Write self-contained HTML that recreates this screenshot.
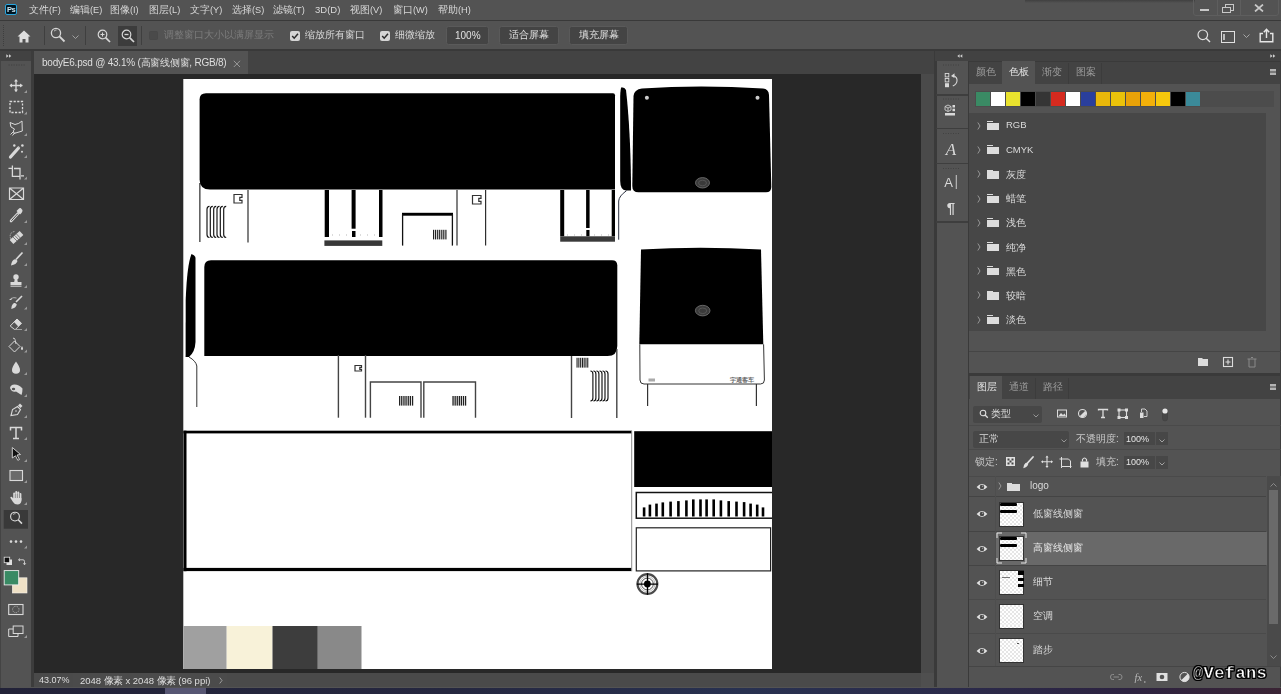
<!DOCTYPE html>
<html><head><meta charset="utf-8">
<style>
*{margin:0;padding:0;box-sizing:border-box}
html,body{width:1281px;height:694px;overflow:hidden;background:#535353;font-family:"Liberation Sans",sans-serif;color:#d4d4d4;font-size:10px}
.a{position:absolute}
.t{position:absolute;white-space:nowrap;line-height:1;will-change:transform}
.t i{display:inline-block;width:1em;text-align:center;font-style:normal}
</style></head><body>
<!-- menu bar -->
<div class="a" style="left:0;top:0;width:1281px;height:20px;background:#535353"></div>
<div class="a" style="left:0;top:20px;width:1281px;height:1px;background:#393939"></div>
<!-- options bar -->
<div class="a" style="left:0;top:21px;width:1281px;height:29px;background:#535353"></div>
<div class="a" style="left:0;top:49px;width:1281px;height:2px;background:#393939"></div>

<!-- PS logo -->
<div class="a" style="left:5px;top:4px;width:12px;height:11px;background:#001622;border:1.2px solid #2aa6de;border-radius:2px"></div>
<div class="t" style="left:7.3px;top:6px;font-size:7.5px;font-weight:bold;color:#cfe9f2;letter-spacing:-0.4px">Ps</div>
<div class="t" style="left:29px;top:5px;font-size:10px;color:#d8d8d8"><i>文</i><i>件</i><span style="font-size:9.2px">(F)</span></div>
<div class="t" style="left:70px;top:5px;font-size:10px;color:#d8d8d8"><i>编</i><i>辑</i><span style="font-size:9.2px">(E)</span></div>
<div class="t" style="left:110px;top:5px;font-size:10px;color:#d8d8d8"><i>图</i><i>像</i><span style="font-size:9.2px">(I)</span></div>
<div class="t" style="left:149px;top:5px;font-size:10px;color:#d8d8d8"><i>图</i><i>层</i><span style="font-size:9.2px">(L)</span></div>
<div class="t" style="left:190px;top:5px;font-size:10px;color:#d8d8d8"><i>文</i><i>字</i><span style="font-size:9.2px">(Y)</span></div>
<div class="t" style="left:232px;top:5px;font-size:10px;color:#d8d8d8"><i>选</i><i>择</i><span style="font-size:9.2px">(S)</span></div>
<div class="t" style="left:273px;top:5px;font-size:10px;color:#d8d8d8"><i>滤</i><i>镜</i><span style="font-size:9.2px">(T)</span></div>
<div class="t" style="left:315px;top:5px;font-size:10px;color:#d8d8d8"><span style="font-size:9.5px">3D(D)</span></div>
<div class="t" style="left:350px;top:5px;font-size:10px;color:#d8d8d8"><i>视</i><i>图</i><span style="font-size:9.2px">(V)</span></div>
<div class="t" style="left:393px;top:5px;font-size:10px;color:#d8d8d8"><i>窗</i><i>口</i><span style="font-size:9.2px">(W)</span></div>
<div class="t" style="left:438px;top:5px;font-size:10px;color:#d8d8d8"><i>帮</i><i>助</i><span style="font-size:9.2px">(H)</span></div>
<!-- window controls -->
<div class="a" style="left:1025px;top:0;width:170px;height:3px;background:linear-gradient(#404040,rgba(83,83,83,0))"></div>
<div class="a" style="left:1193px;top:-2px;width:86px;height:17.5px;border:1px solid #5e5e5e;border-radius:0 0 3px 3px"></div>
<div class="a" style="left:1216.5px;top:0;width:1px;height:15px;background:#5e5e5e"></div>
<div class="a" style="left:1239.5px;top:0;width:1px;height:15px;background:#5e5e5e"></div>
<div class="a" style="left:1200px;top:8.5px;width:9px;height:2.5px;background:#c8c8c8"></div>
<div class="a" style="left:1225px;top:3.5px;width:9px;height:7px;border:1.5px solid #c8c8c8"></div>
<div class="a" style="left:1222px;top:6.5px;width:8.5px;height:6.5px;border:1.5px solid #c8c8c8;background:#535353"></div>
<svg class="a" style="left:1254px;top:4px" width="10" height="8"><path d="M1 0.5 L9 7.5 M9 0.5 L1 7.5" stroke="#c8c8c8" stroke-width="1.7"/></svg>
<!-- options bar -->
<div class="a" style="left:3px;top:25px;width:1px;height:21px;border-left:1px dotted #3e3e3e"></div>
<svg class="a" style="left:17px;top:30px" width="14" height="13"><path d="M7 0.5 L13.5 6.5 L11.5 6.5 L11.5 12.5 L8.5 12.5 L8.5 9 L5.5 9 L5.5 12.5 L2.5 12.5 L2.5 6.5 L0.5 6.5 Z" fill="#dedede"/></svg>
<div class="a" style="left:44px;top:26px;width:1px;height:19px;background:#3f3f3f"></div>
<svg class="a" style="left:50px;top:27px" width="16" height="16"><circle cx="6" cy="6" r="4.6" fill="none" stroke="#d6d6d6" stroke-width="1.3"/><path d="M9.4 9.4 L14.5 14.5" stroke="#d6d6d6" stroke-width="1.8"/><path d="M4 4.2 Q5 3 6.5 3" stroke="#d6d6d6" stroke-width="0.8" fill="none"/></svg>
<svg class="a" style="left:72px;top:35px" width="7" height="4"><path d="M0.5 0.5 L3.5 3.5 L6.5 0.5" stroke="#a8a8a8" stroke-width="0.9" fill="none"/></svg>
<div class="a" style="left:85px;top:26px;width:1px;height:19px;background:#3f3f3f"></div>
<svg class="a" style="left:97px;top:29px" width="14" height="14"><circle cx="5.5" cy="5.5" r="4.3" fill="none" stroke="#d6d6d6" stroke-width="1.2"/><path d="M8.6 8.6 L13 13" stroke="#d6d6d6" stroke-width="1.7"/><path d="M3.5 5.5 H7.5 M5.5 3.5 V7.5" stroke="#d6d6d6" stroke-width="1"/></svg>
<div class="a" style="left:118px;top:26px;width:19px;height:20px;background:#3c3c3c"></div>
<svg class="a" style="left:121px;top:29px" width="14" height="14"><circle cx="5.5" cy="5.5" r="4.3" fill="none" stroke="#d6d6d6" stroke-width="1.2"/><path d="M8.6 8.6 L13 13" stroke="#d6d6d6" stroke-width="1.7"/><path d="M3.5 5.5 H7.5" stroke="#d6d6d6" stroke-width="1.3"/></svg>
<div class="a" style="left:141px;top:26px;width:1px;height:19px;background:#3f3f3f"></div>
<div class="a" style="left:149px;top:31px;width:9px;height:9px;background:#4a4a4a;border:1px solid #484848;border-radius:1.5px"></div>
<div class="t" style="left:164px;top:29.8px;font-size:10px;color:#7c7c7c"><i>调</i><i>整</i><i>窗</i><i>口</i><i>大</i><i>小</i><i>以</i><i>满</i><i>屏</i><i>显</i><i>示</i></div>
<div class="a" style="left:290px;top:30.5px;width:10px;height:10px;background:#d4d4d4;border-radius:2px"></div>
<svg class="a" style="left:290px;top:30.5px" width="10" height="10"><path d="M2.2 5 L4.2 7.2 L8 2.8" stroke="#2a2a2a" stroke-width="1.5" fill="none"/></svg>
<div class="t" style="left:305px;top:29.8px;font-size:10px;color:#d8d8d8"><i>缩</i><i>放</i><i>所</i><i>有</i><i>窗</i><i>口</i></div>
<div class="a" style="left:380px;top:30.5px;width:10px;height:10px;background:#d4d4d4;border-radius:2px"></div>
<svg class="a" style="left:380px;top:30.5px" width="10" height="10"><path d="M2.2 5 L4.2 7.2 L8 2.8" stroke="#2a2a2a" stroke-width="1.5" fill="none"/></svg>
<div class="t" style="left:395px;top:29.8px;font-size:10px;color:#d8d8d8"><i>细</i><i>微</i><i>缩</i><i>放</i></div>
<div class="a" style="left:446px;top:26px;width:43px;height:18.5px;background:#444444;border:1px solid #5a5a5a;border-radius:2.5px"></div>
<div class="t" style="left:455px;top:30.6px;font-size:10px;color:#e0e0e0">100%</div>
<div class="a" style="left:499px;top:26px;width:60px;height:18.5px;background:#444444;border:1px solid #5a5a5a;border-radius:2.5px"></div>
<div class="t" style="left:509px;top:29.8px;font-size:10px;color:#e0e0e0"><i>适</i><i>合</i><i>屏</i><i>幕</i></div>
<div class="a" style="left:569px;top:26px;width:59px;height:18.5px;background:#444444;border:1px solid #5a5a5a;border-radius:2.5px"></div>
<div class="t" style="left:579px;top:29.8px;font-size:10px;color:#e0e0e0"><i>填</i><i>充</i><i>屏</i><i>幕</i></div>
<svg class="a" style="left:1197px;top:29px" width="14" height="14"><circle cx="5.8" cy="5.8" r="4.8" fill="none" stroke="#e0e0e0" stroke-width="1.2"/><path d="M9.2 9.2 L13 13" stroke="#e0e0e0" stroke-width="1.4"/></svg>
<div class="a" style="left:1221px;top:31px;width:14px;height:11.5px;border:1.3px solid #e0e0e0"></div>
<div class="a" style="left:1223px;top:34px;width:2px;height:5.5px;background:#bdbdbd"></div>
<svg class="a" style="left:1243px;top:34px" width="7" height="4"><path d="M0.5 0.5 L3.5 3.5 L6.5 0.5" stroke="#b0b0b0" stroke-width="0.9" fill="none"/></svg>
<svg class="a" style="left:1259px;top:28px" width="16" height="15"><path d="M4 5.5 H1.2 V13.8 H13.8 V5.5 H11" stroke="#e6e6e6" stroke-width="1.4" fill="none"/><path d="M7.5 10 V2 M4.8 4.3 L7.5 1.2 L10.2 4.3" stroke="#e6e6e6" stroke-width="1.4" fill="none"/></svg>
<!-- toolbar -->
<div class="a" style="left:0;top:51px;width:32px;height:10px;background:#424242"></div>
<div class="a" style="left:0;top:61px;width:32px;height:626px;background:#535353"></div>
<div class="a" style="left:31px;top:51px;width:3px;height:636px;background:#3c3c3c"></div>

<svg class="a" style="left:0;top:61px" width="32" height="626" viewBox="0 61 32 626">
<g stroke="#3c3c3c" stroke-width="0.8"><path d="M8.5 65 h1.2 M11 65 h1.2 M13.5 65 h1.2 M16 65 h1.2 M18.5 65 h1.2 M21 65 h1.2 M23.5 65 h1.2"/></g>
<!-- move -->
<g stroke="#d9d9d9" stroke-width="1.3" fill="#d9d9d9"><path d="M16 80 V91.5 M10 85.5 H22.3" fill="none"/><path d="M16 79 L14 81.5 H18 Z M16 92 L14 89.5 H18 Z M9.4 85.5 L12 83.5 V87.5 Z M22.7 85.5 L20 83.5 V87.5 Z" stroke="none"/></g><path d="M27 93 L27 90 L24 93 Z" fill="#9a9a9a"/>
<!-- marquee -->
<rect x="10" y="101.5" width="12.5" height="11" fill="none" stroke="#d9d9d9" stroke-width="1.3" stroke-dasharray="2.2 1.4"/><path d="M27 114.5 L27 111.5 L24 114.5 Z" fill="#9a9a9a"/>
<!-- lasso -->
<path d="M10 122.5 L15 124.5 Q19 124 22 121 L22.3 131 L14 133.5 Q12.5 130.5 14.5 129 L11 127 Z M14 131 L10.5 134.5 M15 132.5 L12.5 135.5" fill="none" stroke="#d9d9d9" stroke-width="1"/><path d="M27 136 L27 133 L24 136 Z" fill="#9a9a9a"/>
<!-- wand -->
<path d="M10.5 157 L18.5 148" stroke="#d9d9d9" stroke-width="3.2" stroke-linecap="round"/><path d="M19 147.5 L20.5 146" stroke="#535353" stroke-width="0.8"/>
<g fill="#d9d9d9"><circle cx="14.3" cy="145.5" r="1.2"/><circle cx="22.4" cy="145.5" r="1.3"/><circle cx="22" cy="151.7" r="1"/></g><path d="M27 158 L27 155 L24 158 Z" fill="#9a9a9a"/>
<!-- crop -->
<path d="M8.5 168.3 H12.4 M12.4 165.5 V176.3 H20 V168.5 H14 M20 176.3 V179.5 M21 175.8 H24" fill="none" stroke="#d9d9d9" stroke-width="1.3"/><path d="M27 179.5 L27 176.5 L24 179.5 Z" fill="#9a9a9a"/>
<!-- frame -->
<path d="M9.5 188 H23.5 V199.5 H9.5 Z M9.5 188 L23.5 199.5 M23.5 188 L9.5 199.5" fill="none" stroke="#d9d9d9" stroke-width="1.2"/>
<!-- eyedropper -->
<path d="M11 221 L18 213.5" stroke="#d9d9d9" stroke-width="2.6" stroke-linecap="round" fill="none"/><path d="M11.3 220.8 L17.8 213.8" stroke="#535353" stroke-width="1"/><path d="M16.5 211 L20 214.5 L21.5 213 Q23.5 210 21.5 209 Q20.5 207 18 209.5 Z" fill="#d9d9d9"/><path d="M27 223 L27 220 L24 223 Z" fill="#9a9a9a"/>
<!-- heal -->
<path d="M11.5 242 L21.5 233" stroke="#d9d9d9" stroke-width="5.5" fill="none"/><path d="M13 237 L17.5 241.5 M14.8 235.5 L19 240 M16.5 234 L20.5 238.3" stroke="#535353" stroke-width="0.7"/><path d="M10.5 238.5 Q9 232.5 14.5 231.5" stroke="#d9d9d9" stroke-width="0.8" stroke-dasharray="1 1" fill="none"/><path d="M27 245 L27 242 L24 245 Z" fill="#9a9a9a"/>
<!-- brush -->
<path d="M16 259.5 L22.5 252.5" stroke="#d9d9d9" stroke-width="1.7" fill="none"/><path d="M11 265.5 Q11.5 261 14 259.5 Q16.5 258.5 17.5 261 Q16.5 264.5 11 265.5 Z" fill="#d9d9d9"/><path d="M27 266 L27 263 L24 266 Z" fill="#9a9a9a"/>
<!-- stamp -->
<circle cx="16" cy="277" r="2.7" fill="#d9d9d9"/><path d="M14.8 279 H17.2 L17.8 282 H21.5 V285 H10.5 V282 H14.2 Z" fill="#d9d9d9"/><rect x="10.5" y="285.5" width="11" height="1.5" fill="#b0b0b0"/><path d="M27 288 L27 285 L24 288 Z" fill="#9a9a9a"/>
<!-- history brush -->
<path d="M16 302 L22 296" stroke="#d9d9d9" stroke-width="1.6" fill="none"/><path d="M11.3 309 Q11.5 304.5 14 303 Q16 302.5 16.8 304.5 Q16 308 11.3 309 Z" fill="#d9d9d9"/><path d="M9 300 L11.5 298 V300 Z" fill="#d9d9d9"/><path d="M11 298.5 Q14 297 16.5 298" stroke="#d9d9d9" stroke-width="0.7" fill="none"/><path d="M27 309.5 L27 306.5 L24 309.5 Z" fill="#9a9a9a"/>
<!-- eraser -->
<path d="M10.2 326 L17 319 L21.5 323.3 L15 329.8 Z" fill="none" stroke="#d9d9d9" stroke-width="1"/><path d="M14 322 L17 319 L21.5 323.3 L18.3 326.5 Z" fill="#d9d9d9"/><path d="M14 329.5 H22" stroke="#aaa" stroke-width="0.9"/><path d="M27 331 L27 328 L24 331 Z" fill="#9a9a9a"/>
<!-- bucket -->
<path d="M9 346.5 L14.5 341 L20 346.5 L14.5 352 Z" fill="none" stroke="#d9d9d9" stroke-width="1"/><path d="M13 338.5 Q14 337 15 339.5 L16 344" stroke="#d9d9d9" stroke-width="0.9" fill="none"/><path d="M22 346 Q20.5 348.5 21 349.3 Q22 350.5 23 349.3 Q23.3 348 22 346 Z" fill="#d9d9d9"/><path d="M27 352.5 L27 349.5 L24 352.5 Z" fill="#9a9a9a"/>
<!-- drop -->
<path d="M16 361.5 Q12 367 12 370 Q12 373.8 16 373.8 Q20 373.8 20 370 Q20 367 16 361.5 Z" fill="#d9d9d9"/><path d="M27 375 L27 372 L24 375 Z" fill="#9a9a9a"/>
<!-- dodge -->
<path d="M10 388 Q10.5 384.5 14.5 384.5 Q19 384.5 22.5 388.5 Q22.5 393 21.5 395 L16 391.5 Q11.5 392.5 10 388 Z" fill="#d9d9d9"/><ellipse cx="13.5" cy="389" rx="1.7" ry="1.2" fill="#535353"/><path d="M27 397 L27 394 L24 397 Z" fill="#9a9a9a"/>
<!-- pen -->
<path d="M11 415.5 L12.5 409.5 L17.5 406.5 L20.5 409.5 L17.5 414.5 Z" fill="none" stroke="#d9d9d9" stroke-width="1.1"/><path d="M18 405.5 L20 403.5 L22.5 406 L20.5 408 Z" fill="#d9d9d9"/><circle cx="16" cy="411" r="0.8" fill="#d9d9d9"/><path d="M27 418 L27 415 L24 418 Z" fill="#9a9a9a"/>
<!-- type -->
<path d="M10.5 430.5 V427.5 H21.5 V430.5 M16 427.5 V438.5 M13 438.5 H19" fill="none" stroke="#d9d9d9" stroke-width="1.5"/><path d="M27 440 L27 437 L24 440 Z" fill="#9a9a9a"/>
<!-- path select -->
<path d="M12.3 447.5 L20.5 454.5 L17 455 L19.5 459.5 L17.8 460.3 L15.5 455.8 L12.3 458 Z" fill="#111" stroke="#d9d9d9" stroke-width="0.9"/><path d="M27 462 L27 459 L24 462 Z" fill="#9a9a9a"/>
<!-- rect -->
<rect x="10" y="470.5" width="12.5" height="10" fill="#6a6a6a" stroke="#d9d9d9" stroke-width="1.1"/><path d="M27 483 L27 480 L24 483 Z" fill="#9a9a9a"/>
<!-- hand -->
<g fill="#d9d9d9"><rect x="13.2" y="492.5" width="1.9" height="8" rx="0.9"/><rect x="15.3" y="491" width="1.9" height="9" rx="0.9"/><rect x="17.4" y="491.5" width="1.9" height="9" rx="0.9"/><rect x="19.5" y="493" width="1.9" height="8" rx="0.9"/>
<path d="M13.2 498 H21.4 V501 Q21 504.3 17.5 504.5 Q14.5 504.5 13 502 L10.3 497.8 Q10.5 496.3 12 497 L13.2 498.5 Z"/></g>
<path d="M15.2 494 V498 M17.3 494 V498 M19.4 494 V498" stroke="#535353" stroke-width="0.35"/>
<path d="M27 505 L27 502 L24 505 Z" fill="#9a9a9a"/>
<!-- zoom active -->
<rect x="3.7" y="510" width="24.3" height="18.7" fill="#393939"/>
<circle cx="15" cy="516.6" r="4.4" fill="none" stroke="#d9d9d9" stroke-width="1.1"/><path d="M18.2 519.8 L22 523.6" stroke="#d9d9d9" stroke-width="1.5"/><path d="M13 514.5 Q14 513.5 15.5 513.7" stroke="#d9d9d9" stroke-width="0.8" fill="none"/>
<!-- dots -->
<g fill="#d9d9d9"><circle cx="11" cy="541.6" r="1.3"/><circle cx="16" cy="541.6" r="1.3"/><circle cx="21" cy="541.6" r="1.3"/></g><path d="M27 548.5 L27 545.5 L24 548.5 Z" fill="#9a9a9a"/>
<!-- default colours -->
<rect x="6.5" y="559.5" width="5.5" height="5.5" fill="#e0e0e0"/><rect x="4.2" y="557.2" width="5.5" height="5.5" fill="#111" stroke="#e0e0e0" stroke-width="0.8"/>
<path d="M20 558.5 L18.5 559.8 L20 561 M18.8 559.8 H23 Q24.5 559.8 24.5 561.5 V564.5 M23.3 563.3 L24.5 564.8 L25.8 563.3" fill="none" stroke="#d9d9d9" stroke-width="0.9"/>
<!-- colours -->
<rect x="12.3" y="577.8" width="14.7" height="15.2" fill="#efe1c6" stroke="#f4f0ea" stroke-width="0.6"/>
<rect x="4.2" y="570.6" width="14.5" height="14.3" fill="#398a64" stroke="#ececec" stroke-width="0.9"/>
<!-- quick mask -->
<rect x="8.7" y="604.5" width="14.3" height="10" fill="none" stroke="#d9d9d9" stroke-width="1.1"/><circle cx="15.8" cy="609.5" r="3.2" fill="none" stroke="#d9d9d9" stroke-width="0.7" stroke-dasharray="0.9 0.9"/>
<!-- screen mode -->
<rect x="13.2" y="626" width="9.8" height="7.5" fill="#535353" stroke="#d9d9d9" stroke-width="1"/><path d="M13.2 629 H8.7 V636.5 H18 V633.5" fill="none" stroke="#d9d9d9" stroke-width="1"/><path d="M27 638 L27 635 L24 638 Z" fill="#9a9a9a"/>
</svg>
<div class="a" style="left:0;top:61px;width:1px;height:627px;background:#444"></div>
<!-- doc area -->
<div class="a" style="left:34px;top:51px;width:901px;height:23px;background:#434343"></div>
<div class="a" style="left:34px;top:51px;width:214px;height:23px;background:#535353"></div>
<div class="a" style="left:34px;top:74px;width:887px;height:599px;background:#282828"></div>
<div class="a" style="left:921px;top:74px;width:13px;height:599px;background:#4a4a4a"></div>
<!-- canvas -->
<svg class="a" style="left:183px;top:79px" width="589" height="590" viewBox="183 79 589 590">
<rect x="183.3" y="79" width="589" height="590" fill="#fff"/>
<!-- row1 big black -->
<path d="M206 93.3 L613 93.3 Q615 93.3 615 95.3 L615 189.6 L210 189.6 Q199.6 189.6 199.6 179.6 L199.6 99.3 Q199.6 93.3 206 93.3 Z" fill="#000"/>
<g stroke="#000" stroke-width="1" fill="none">
<line x1="199.9" y1="183" x2="199.9" y2="242"/>
</g>
<g stroke="#2e2e2e" stroke-width="1.2" fill="none">
<line x1="248" y1="190" x2="248" y2="242.5"/>
<line x1="457" y1="190" x2="457" y2="245.6"/>
<line x1="485.6" y1="190" x2="485.6" y2="245.6"/>
</g>
<g stroke="#333" stroke-width="1.2" fill="none">
<path d="M234 194.5 H242 V197.3 H239.8 V200.3 H242 V203 H234 Z"/>
<path d="M472.5 195.5 H481 V198.3 H478.8 V201.3 H481 V204 H472.5 Z"/>
<path d="M355 365.5 H361.5 V367.3 H359.8 V369.3 H361.5 V371 H355 Z"/>
</g>
<g stroke="#111" stroke-width="1.15" fill="none"><path d="M209.5 206.3 Q207.0 206.3 207.0 209.3 L207.0 234.5 Q207.0 237.5 209.5 237.5" /><path d="M212.8 206.3 Q210.3 206.3 210.3 209.3 L210.3 234.5 Q210.3 237.5 212.8 237.5" /><path d="M216.2 206.3 Q213.7 206.3 213.7 209.3 L213.7 234.5 Q213.7 237.5 216.2 237.5" /><path d="M219.5 206.3 Q217.0 206.3 217.0 209.3 L217.0 234.5 Q217.0 237.5 219.5 237.5" /><path d="M222.8 206.3 Q220.3 206.3 220.3 209.3 L220.3 234.5 Q220.3 237.5 222.8 237.5" /><path d="M226.2 206.3 Q223.7 206.3 223.7 209.3 L223.7 234.5 Q223.7 237.5 226.2 237.5" /><path d="M590.4 371 Q592.9 371 592.9 374 L592.9 398 Q592.9 401 590.4 401" /><path d="M593.4 371 Q595.9 371 595.9 374 L595.9 398 Q595.9 401 593.4 401" /><path d="M596.4 371 Q598.9 371 598.9 374 L598.9 398 Q598.9 401 596.4 401" /><path d="M599.5 371 Q602.0 371 602.0 374 L602.0 398 Q602.0 401 599.5 401" /><path d="M602.5 371 Q605.0 371 605.0 374 L605.0 398 Q605.0 401 602.5 401" /><path d="M605.5 371 Q608.0 371 608.0 374 L608.0 398 Q608.0 401 605.5 401" /></g>
<g fill="#000">
<rect x="324.7" y="190" width="4.3" height="47"/>
<rect x="351.6" y="190" width="4" height="38.7"/>
<rect x="352" y="231" width="3.5" height="6"/>
<rect x="379" y="190" width="3.5" height="47"/>
<rect x="560.2" y="190" width="4" height="46.3"/>
<rect x="586.1" y="190" width="3.5" height="38"/>
<rect x="586.3" y="230" width="3.2" height="6.3"/>
<rect x="611.7" y="190" width="3.3" height="46.3"/>
<rect x="402" y="212.8" width="51" height="2.9"/>
</g>
<rect x="324.4" y="240.4" width="57.9" height="5.5" fill="#383838"/>
<rect x="560.2" y="236.3" width="54.8" height="5.4" fill="#3a3a3a"/>
<g stroke="#111" stroke-width="1.3" fill="none">
<line x1="402.6" y1="214" x2="402.6" y2="245.6"/>
<line x1="452.4" y1="214" x2="452.4" y2="245.6"/>
</g>
<g fill="#222"><rect x="433.0" y="229.8" width="1.2" height="9.599999999999994"/><rect x="435.0" y="229.8" width="1.2" height="9.599999999999994"/><rect x="437.1" y="229.8" width="1.2" height="9.599999999999994"/><rect x="439.1" y="229.8" width="1.2" height="9.599999999999994"/><rect x="441.2" y="229.8" width="1.2" height="9.599999999999994"/><rect x="443.2" y="229.8" width="1.2" height="9.599999999999994"/><rect x="445.3" y="229.8" width="1.2" height="9.599999999999994"/><rect x="576.5" y="357.8" width="1.1" height="9.800000000000011"/><rect x="578.3" y="357.8" width="1.1" height="9.800000000000011"/><rect x="580.1" y="357.8" width="1.1" height="9.800000000000011"/><rect x="581.9" y="357.8" width="1.1" height="9.800000000000011"/><rect x="583.6" y="357.8" width="1.1" height="9.800000000000011"/><rect x="585.4" y="357.8" width="1.1" height="9.800000000000011"/><rect x="587.2" y="357.8" width="1.1" height="9.800000000000011"/><rect x="399.0" y="396" width="1.3" height="9.600000000000023"/><rect x="401.1" y="396" width="1.3" height="9.600000000000023"/><rect x="403.3" y="396" width="1.3" height="9.600000000000023"/><rect x="405.4" y="396" width="1.3" height="9.600000000000023"/><rect x="407.6" y="396" width="1.3" height="9.600000000000023"/><rect x="409.7" y="396" width="1.3" height="9.600000000000023"/><rect x="411.9" y="396" width="1.3" height="9.600000000000023"/><rect x="452.4" y="396" width="1.3" height="9.600000000000023"/><rect x="454.5" y="396" width="1.3" height="9.600000000000023"/><rect x="456.6" y="396" width="1.3" height="9.600000000000023"/><rect x="458.7" y="396" width="1.3" height="9.600000000000023"/><rect x="460.7" y="396" width="1.3" height="9.600000000000023"/><rect x="462.8" y="396" width="1.3" height="9.600000000000023"/><rect x="464.9" y="396" width="1.3" height="9.600000000000023"/></g>
<g stroke="#888" stroke-width="0.6">
<path d="M332 235 h1 M339 235 h1 M346 235 h1 M360 235 h1 M367 235 h1 M374 235 h1"/>
<path d="M567 235 h1 M574 235 h1 M581 235 h1 M594 235 h1 M601 235 h1 M608 235 h1"/>
</g>
<!-- side thin shape row1 -->
<path d="M621.5 87.2 Q625 87.5 626 90 Q630.3 128 631 182 L631 190.5 L626 190.5 Q620.2 190 620.2 181 L620.2 96 Q620.5 88 621.5 87.2 Z" fill="#000"/>
<path d="M626.5 190.7 Q619 196 618.7 201 L618.7 239.7" stroke="#2a3040" stroke-width="1" fill="none"/>
<!-- rear panel row1 -->
<path d="M642 88.5 Q700 84.5 763 88.5 Q768.7 89 769 95 L771.3 187 Q771.3 192.3 766 192.3 L638.5 192.3 Q632.3 192.3 632.3 186 L633.5 96 Q634 89.5 642 88.5 Z" fill="#000"/>
<circle cx="646.9" cy="97.7" r="2" fill="#ccc"/>
<circle cx="757.5" cy="97.7" r="2" fill="#ccc"/>
<ellipse cx="702.5" cy="182.8" rx="7" ry="5.2" fill="#3a3a3a" stroke="#777" stroke-width="0.8"/>
<ellipse cx="702.5" cy="183" rx="4" ry="2.8" fill="none" stroke="#666" stroke-width="0.6"/>
<!-- row2 thin left shape -->
<path d="M191.5 254 Q195.3 255.5 195.5 258 L195.5 342 Q195 352 189 357 L185.6 357 L185.7 300 Q187 265 191.5 254 Z" fill="#000"/>
<path d="M189 357 Q196 361 196.8 366 L196.8 407" stroke="#333" stroke-width="1" fill="none"/>
<!-- row2 big black -->
<path d="M211 260.2 L612 260.2 Q617.3 260.2 617.3 265.5 L617.3 346 Q617.3 356 607.5 356 L204.3 356 L204.3 267 Q204.3 260.2 211 260.2 Z" fill="#000"/>
<g stroke="#444" stroke-width="1.4" fill="none">
<line x1="338.4" y1="355" x2="338.4" y2="417.7"/>
<line x1="365.5" y1="355" x2="365.5" y2="417.7"/>
<line x1="571.5" y1="356" x2="571.5" y2="418"/>
<line x1="616.8" y1="349" x2="616.8" y2="418"/>
<path d="M370.4 417.7 V382 H421 V417.7"/>
<path d="M423.8 417.7 V382 H475.5 V417.7"/>
</g>
<!-- bus front -->
<path d="M641 249.5 Q700 246 761 249.5 L763.3 344.3 L639.3 344.3 Z" fill="#000"/>
<path d="M639.8 344.3 L640 380 Q640 384 644 384 L760.5 384 Q764.4 384 764.4 380 L763.6 344.3" fill="none" stroke="#333" stroke-width="1"/>
<g stroke="#333" stroke-width="1.2"><line x1="647.6" y1="384" x2="647.6" y2="406"/><line x1="756.4" y1="384" x2="756.4" y2="406"/></g>
<ellipse cx="702.7" cy="310.6" rx="7.3" ry="5.3" fill="#3a3a3a" stroke="#777" stroke-width="0.8"/>
<ellipse cx="702.7" cy="310.8" rx="4" ry="2.8" fill="none" stroke="#666" stroke-width="0.6"/>
<text x="730" y="381.5" font-size="6.3" fill="#6a6a6a" font-weight="bold" textLength="24.6" lengthAdjust="spacingAndGlyphs">宇通客车</text><rect x="648.5" y="378.5" width="6.5" height="3" fill="#aaa"/>
<!-- row3 -->
<rect x="183.5" y="430.7" width="448.3" height="2.7" fill="#000"/>
<rect x="183.5" y="430.7" width="3" height="140.5" fill="#000"/>
<rect x="183.5" y="567.9" width="448" height="3.2" fill="#000"/>
<rect x="631.2" y="430.7" width="1" height="140.5" fill="#8a8a8a"/>
<rect x="634.2" y="431.2" width="138" height="55.8" fill="#000"/>
<rect x="636.3" y="492.5" width="140" height="25.7" fill="none" stroke="#111" stroke-width="1.5"/>
<g fill="#000"><rect x="642.8" y="507.4" width="2.6" height="9.1"/><rect x="648.6" y="504.6" width="2.6" height="11.9"/><rect x="655.2" y="503.6" width="2.6" height="12.9"/><rect x="661.5" y="502.4" width="2.6" height="14.1"/><rect x="669.3" y="501.6" width="2.6" height="14.9"/><rect x="677.1" y="501.1" width="2.6" height="15.4"/><rect x="685.1" y="500.4" width="2.6" height="16.1"/><rect x="692.0" y="499.4" width="2.6" height="17.1"/><rect x="699.2" y="499.4" width="2.6" height="17.1"/><rect x="705.3" y="499.4" width="2.6" height="17.1"/><rect x="712.4" y="499.4" width="2.6" height="17.1"/><rect x="719.6" y="500.4" width="2.6" height="16.1"/><rect x="727.4" y="501.1" width="2.6" height="15.4"/><rect x="735.2" y="501.6" width="2.6" height="14.9"/><rect x="742.8" y="502.1" width="2.6" height="14.4"/><rect x="749.3" y="503.6" width="2.6" height="12.9"/><rect x="755.9" y="504.6" width="2.6" height="11.9"/><rect x="761.7" y="507.4" width="2.6" height="9.1"/></g>
<rect x="636.3" y="527.8" width="134.3" height="43.1" fill="none" stroke="#222" stroke-width="1.2"/>
<g>
<circle cx="647.4" cy="584" r="9.9" fill="none" stroke="#4a4a4a" stroke-width="2.2"/>
<circle cx="647.4" cy="584" r="7.6" fill="none" stroke="#aaa" stroke-width="0.8"/>
<circle cx="647.4" cy="584" r="5.9" fill="none" stroke="#555" stroke-width="1"/>
<circle cx="647.4" cy="584" r="3.4" fill="#000"/>
<path d="M636.8 584.2 H658 M647.5 573.3 V594.8" stroke="#000" stroke-width="1.3"/>
</g>
<rect x="183.5" y="626" width="43.2" height="43" fill="#a0a0a0"/>
<rect x="226.7" y="626" width="45.8" height="43" fill="#f8f2d9"/>
<rect x="272.5" y="626" width="45.3" height="43" fill="#3d3d3d"/>
<rect x="317.8" y="626" width="43.7" height="43" fill="#898989"/>
</svg>
<!-- status bar -->
<div class="a" style="left:34px;top:673px;width:887px;height:14px;background:#4a4a4a"></div><div class="a" style="left:921px;top:673px;width:13.5px;height:14px;background:#4f4f4f"></div>
<!-- right icon column -->
<div class="a" style="left:934px;top:51px;width:35px;height:636px;background:#3a3a3a"></div>
<div class="a" style="left:934.5px;top:51px;width:346.5px;height:10px;background:#424242"></div>
<div class="a" style="left:936.5px;top:61px;width:31px;height:626px;background:#535353"></div>
<!-- right panels -->
<div class="a" style="left:969px;top:51px;width:312px;height:10px;background:#424242"></div>
<div class="a" style="left:969px;top:61px;width:312px;height:23px;background:#434343"></div>
<div class="a" style="left:969px;top:84px;width:312px;height:29px;background:#535353"></div>
<div class="a" style="left:969px;top:113px;width:297px;height:218px;background:#474747"></div>
<div class="a" style="left:969px;top:332px;width:312px;height:41px;background:#535353"></div>
<div class="a" style="left:969px;top:373px;width:312px;height:3px;background:#3a3a3a"></div>
<div class="a" style="left:969px;top:376px;width:312px;height:23px;background:#434343"></div>
<div class="a" style="left:969px;top:399px;width:312px;height:288px;background:#535353"></div>

<!-- right header arrows -->
<div class="a" style="left:969px;top:60.5px;width:312px;height:1px;background:#3a3a3a"></div><div class="a" style="left:1280px;top:61px;width:1px;height:626px;background:#3e3e3e"></div>
<svg class="a" style="left:957px;top:53.5px" width="6" height="4"><path d="M2.6 0.3 L0.3 2 L2.6 3.7 Z M5.3 0.3 L3 2 L5.3 3.7 Z" fill="#cfcfcf"/></svg>
<svg class="a" style="left:1270px;top:53.5px" width="6" height="4"><path d="M0.3 0.3 L2.6 2 L0.3 3.7 Z M3 0.3 L5.3 2 L3 3.7 Z" fill="#cfcfcf"/></svg>
<svg class="a" style="left:5.5px;top:53.5px" width="6" height="4"><path d="M0.3 0.3 L2.6 2 L0.3 3.7 Z M3 0.3 L5.3 2 L3 3.7 Z" fill="#cfcfcf"/></svg>
<!-- icon column panels -->
<div class="a" style="left:936px;top:94px;width:32px;height:1.5px;background:#3e3e3e"></div>
<div class="a" style="left:936px;top:127.5px;width:32px;height:1.5px;background:#3e3e3e"></div>
<div class="a" style="left:936px;top:162.8px;width:32px;height:1.5px;background:#3e3e3e"></div>
<div class="a" style="left:936px;top:221px;width:32px;height:1.5px;background:#3e3e3e"></div>
<svg class="a" style="left:936px;top:61px;will-change:transform" width="32" height="170" viewBox="936 61 32 170">
<g stroke="#3c3c3c" stroke-width="0.8"><path d="M943 65 h1 M945.5 65 h1 M948 65 h1 M950.5 65 h1 M953 65 h1 M955.5 65 h1 M958 65 h1"/><path d="M943 99 h1 M945.5 99 h1 M948 99 h1 M950.5 99 h1 M953 99 h1 M955.5 99 h1 M958 99 h1"/><path d="M943 133.5 h1 M945.5 133.5 h1 M948 133.5 h1 M950.5 133.5 h1 M953 133.5 h1 M955.5 133.5 h1 M958 133.5 h1"/><path d="M943 168.5 h1 M945.5 168.5 h1 M948 168.5 h1 M950.5 168.5 h1 M953 168.5 h1 M955.5 168.5 h1 M958 168.5 h1"/></g>
<!-- history -->
<rect x="945.2" y="73.5" width="3.6" height="3.4" fill="none" stroke="#d9d9d9" stroke-width="0.9"/><rect x="945.2" y="78.5" width="3.6" height="3.4" fill="none" stroke="#d9d9d9" stroke-width="0.9"/><rect x="945" y="83.2" width="4" height="4" fill="#d9d9d9"/>
<path d="M953 75.5 Q957.5 77 957 81 Q956.5 84.5 952.8 86" stroke="#d9d9d9" stroke-width="1.1" fill="none"/><path d="M951 76 L954.5 73.3 L954.5 78 Z" fill="#d9d9d9"/>
<!-- 3D -->
<path d="M945 106.5 L948 105 L951 106.5 V110 L948 111.5 L945 110 Z M945 106.5 L948 108 L951 106.5 M948 108 V111.5" fill="none" stroke="#d9d9d9" stroke-width="0.8"/>
<rect x="952.5" y="105" width="2.5" height="2.5" fill="#d9d9d9"/><rect x="952.5" y="108.7" width="2.5" height="2.5" fill="#d9d9d9"/><rect x="945" y="113" width="10" height="2.5" fill="#d9d9d9"/>
<!-- A script -->
<text x="951" y="155" font-family="Liberation Serif" font-style="italic" font-size="17" fill="#d9d9d9" text-anchor="middle">A</text>
<text x="948.5" y="187" font-family="Liberation Sans" font-size="13" fill="#d9d9d9" text-anchor="middle">A</text><rect x="955.8" y="175" width="0.9" height="14" fill="#d9d9d9"/>
<text x="950.8" y="212.5" font-family="Liberation Sans" font-weight="bold" font-size="15" fill="#d9d9d9" text-anchor="middle">¶</text>
</svg>
<!-- swatches tabs -->
<div class="a" style="left:1002px;top:61px;width:33px;height:23px;background:#535353"></div>
<div class="a" style="left:1068px;top:63px;width:1px;height:21px;background:#3c3c3c"></div>
<div class="a" style="left:1101px;top:63px;width:1px;height:21px;background:#3c3c3c"></div>
<div class="t" style="left:976px;top:67px;font-size:10px;color:#9c9c9c"><i>颜</i><i>色</i></div>
<div class="t" style="left:1009px;top:67px;font-size:10px;color:#e6e6e6"><i>色</i><i>板</i></div>
<div class="t" style="left:1042px;top:67px;font-size:10px;color:#9c9c9c"><i>渐</i><i>变</i></div>
<div class="t" style="left:1076px;top:67px;font-size:10px;color:#9c9c9c"><i>图</i><i>案</i></div>
<div class="a" style="left:1269.5px;top:69px;width:6.5px;height:5.5px;background:#b4b4b4"></div><div class="a" style="left:1269.5px;top:70.5px;width:6.5px;height:0.8px;background:#7a7a7a"></div><div class="a" style="left:1269.5px;top:72.3px;width:6.5px;height:0.8px;background:#7a7a7a"></div>
<div class="a" style="left:975px;top:91px;width:299px;height:15.5px;background:#4c4c4c"></div>
<div class="a" style="left:976px;top:92px;width:14px;height:14px;background:#3a8a64"></div><div class="a" style="left:991px;top:92px;width:14px;height:14px;background:#ffffff"></div><div class="a" style="left:1006px;top:92px;width:14px;height:14px;background:#e9e22e"></div><div class="a" style="left:1021px;top:92px;width:14px;height:14px;background:#000000"></div><div class="a" style="left:1036px;top:92px;width:14px;height:14px;background:#353535"></div><div class="a" style="left:1051px;top:92px;width:14px;height:14px;background:#d52a1f"></div><div class="a" style="left:1066px;top:92px;width:14px;height:14px;background:#ffffff"></div><div class="a" style="left:1081px;top:92px;width:14px;height:14px;background:#2a3f9c"></div><div class="a" style="left:1096px;top:92px;width:14px;height:14px;background:#e9b80a"></div><div class="a" style="left:1111px;top:92px;width:14px;height:14px;background:#eac20a"></div><div class="a" style="left:1126px;top:92px;width:14px;height:14px;background:#e8a208"></div><div class="a" style="left:1141px;top:92px;width:14px;height:14px;background:#f2b00a"></div><div class="a" style="left:1156px;top:92px;width:14px;height:14px;background:#f6c80c"></div><div class="a" style="left:1171px;top:92px;width:14px;height:14px;background:#000000"></div><div class="a" style="left:1186px;top:92px;width:14px;height:14px;background:#3b8a99"></div>
<svg class="a" style="left:977px;top:122.0px" width="4" height="8"><path d="M0.8 0.5 L3 4 L0.8 7.5" stroke="#aaa" stroke-width="0.8" fill="none"/></svg><div class="a" style="left:987px;top:123.0px;width:12px;height:7.3px;background:#dcdcdc"></div><div class="a" style="left:987px;top:121.2px;width:6px;height:1px;background:#dcdcdc"></div><div class="t" style="left:1005.8px;top:120.3px;font-size:9.5px;color:#dadada">RGB</div><svg class="a" style="left:977px;top:146.2px" width="4" height="8"><path d="M0.8 0.5 L3 4 L0.8 7.5" stroke="#aaa" stroke-width="0.8" fill="none"/></svg><div class="a" style="left:987px;top:147.2px;width:12px;height:7.3px;background:#dcdcdc"></div><div class="a" style="left:987px;top:145.4px;width:6px;height:1px;background:#dcdcdc"></div><div class="t" style="left:1005.8px;top:144.5px;font-size:9.5px;color:#dadada">CMYK</div><svg class="a" style="left:977px;top:170.4px" width="4" height="8"><path d="M0.8 0.5 L3 4 L0.8 7.5" stroke="#aaa" stroke-width="0.8" fill="none"/></svg><div class="a" style="left:987px;top:171.4px;width:12px;height:7.3px;background:#dcdcdc"></div><div class="a" style="left:987px;top:169.6px;width:6px;height:1px;background:#dcdcdc"></div><div class="t" style="left:1005.8px;top:169.9px;font-size:9.5px;color:#dadada"><i>灰</i><i>度</i></div><svg class="a" style="left:977px;top:194.6px" width="4" height="8"><path d="M0.8 0.5 L3 4 L0.8 7.5" stroke="#aaa" stroke-width="0.8" fill="none"/></svg><div class="a" style="left:987px;top:195.6px;width:12px;height:7.3px;background:#dcdcdc"></div><div class="a" style="left:987px;top:193.8px;width:6px;height:1px;background:#dcdcdc"></div><div class="t" style="left:1005.8px;top:194.1px;font-size:9.5px;color:#dadada"><i>蜡</i><i>笔</i></div><svg class="a" style="left:977px;top:218.8px" width="4" height="8"><path d="M0.8 0.5 L3 4 L0.8 7.5" stroke="#aaa" stroke-width="0.8" fill="none"/></svg><div class="a" style="left:987px;top:219.8px;width:12px;height:7.3px;background:#dcdcdc"></div><div class="a" style="left:987px;top:218.0px;width:6px;height:1px;background:#dcdcdc"></div><div class="t" style="left:1005.8px;top:218.3px;font-size:9.5px;color:#dadada"><i>浅</i><i>色</i></div><svg class="a" style="left:977px;top:243.0px" width="4" height="8"><path d="M0.8 0.5 L3 4 L0.8 7.5" stroke="#aaa" stroke-width="0.8" fill="none"/></svg><div class="a" style="left:987px;top:244.0px;width:12px;height:7.3px;background:#dcdcdc"></div><div class="a" style="left:987px;top:242.2px;width:6px;height:1px;background:#dcdcdc"></div><div class="t" style="left:1005.8px;top:242.5px;font-size:9.5px;color:#dadada"><i>纯</i><i>净</i></div><svg class="a" style="left:977px;top:267.2px" width="4" height="8"><path d="M0.8 0.5 L3 4 L0.8 7.5" stroke="#aaa" stroke-width="0.8" fill="none"/></svg><div class="a" style="left:987px;top:268.2px;width:12px;height:7.3px;background:#dcdcdc"></div><div class="a" style="left:987px;top:266.4px;width:6px;height:1px;background:#dcdcdc"></div><div class="t" style="left:1005.8px;top:266.7px;font-size:9.5px;color:#dadada"><i>黑</i><i>色</i></div><svg class="a" style="left:977px;top:291.4px" width="4" height="8"><path d="M0.8 0.5 L3 4 L0.8 7.5" stroke="#aaa" stroke-width="0.8" fill="none"/></svg><div class="a" style="left:987px;top:292.4px;width:12px;height:7.3px;background:#dcdcdc"></div><div class="a" style="left:987px;top:290.6px;width:6px;height:1px;background:#dcdcdc"></div><div class="t" style="left:1005.8px;top:290.9px;font-size:9.5px;color:#dadada"><i>较</i><i>暗</i></div><svg class="a" style="left:977px;top:315.6px" width="4" height="8"><path d="M0.8 0.5 L3 4 L0.8 7.5" stroke="#aaa" stroke-width="0.8" fill="none"/></svg><div class="a" style="left:987px;top:316.6px;width:12px;height:7.3px;background:#dcdcdc"></div><div class="a" style="left:987px;top:314.8px;width:6px;height:1px;background:#dcdcdc"></div><div class="t" style="left:1005.8px;top:315.1px;font-size:9.5px;color:#dadada"><i>淡</i><i>色</i></div>
<!-- swatches footer -->
<div class="a" style="left:969px;top:350.8px;width:312px;height:1px;background:#454545"></div>
<svg class="a" style="left:1196px;top:355px" width="70" height="14">
<path d="M2 3 H6 L7 4 H12 V11 H2 Z" fill="#dcdcdc"/>
<rect x="27.5" y="2.5" width="9" height="9" fill="none" stroke="#dcdcdc" stroke-width="1.1"/><path d="M32 4.5 V9.5 M29.5 7 H34.5" stroke="#dcdcdc" stroke-width="1.1"/>
<path d="M51.5 4 H60.5 M53 4 V12 H59 V4 M55 2.5 H57" stroke="#8a8a8a" stroke-width="1" fill="none"/>
</svg>
<!-- layers tabs -->
<div class="a" style="left:970px;top:376px;width:32px;height:23px;background:#535353"></div>
<div class="a" style="left:1035px;top:378px;width:1px;height:21px;background:#3c3c3c"></div>
<div class="a" style="left:1068px;top:378px;width:1px;height:21px;background:#3c3c3c"></div>
<div class="t" style="left:977px;top:381.5px;font-size:10px;color:#e6e6e6"><i>图</i><i>层</i></div>
<div class="t" style="left:1009px;top:381.5px;font-size:10px;color:#9c9c9c"><i>通</i><i>道</i></div>
<div class="t" style="left:1043px;top:381.5px;font-size:10px;color:#9c9c9c"><i>路</i><i>径</i></div>
<div class="a" style="left:1269.5px;top:384px;width:6.5px;height:5.5px;background:#b4b4b4"></div><div class="a" style="left:1269.5px;top:385.5px;width:6.5px;height:0.8px;background:#7a7a7a"></div><div class="a" style="left:1269.5px;top:387.3px;width:6.5px;height:0.8px;background:#7a7a7a"></div>
<!-- filter row -->
<div class="a" style="left:973px;top:406px;width:69px;height:17px;background:#474747;border-radius:2px"></div>
<svg class="a" style="left:979px;top:409px" width="10" height="10"><circle cx="4" cy="4" r="2.8" fill="none" stroke="#ddd" stroke-width="1.1"/><path d="M6 6 L8.8 8.8" stroke="#ddd" stroke-width="1.3"/></svg>
<div class="t" style="left:991px;top:409px;font-size:10px;color:#dadada"><i>类</i><i>型</i></div>
<svg class="a" style="left:1033px;top:413.5px" width="6" height="4"><path d="M0.5 0.5 L3 3 L5.5 0.5" stroke="#aaa" stroke-width="0.8" fill="none"/></svg>
<svg class="a" style="left:1055px;top:405px" width="120" height="20" viewBox="1055 405 120 20">
<rect x="1057.5" y="410" width="9" height="7" fill="none" stroke="#dcdcdc" stroke-width="1"/><path d="M1058.5 416 L1061 413 L1063 415 L1064.5 413.5 L1066 416 Z" fill="#dcdcdc"/>
<circle cx="1082.5" cy="413.5" r="4" fill="none" stroke="#dcdcdc" stroke-width="1.1"/><path d="M1085.3 410.7 A4 4 0 0 1 1079.7 416.3 Z" fill="#dcdcdc"/>
<path d="M1098.5 410.5 V409.5 H1107.5 V410.5 M1103 409.5 V417.5 M1101 417.5 H1105" fill="none" stroke="#dcdcdc" stroke-width="1.3"/>
<rect x="1119" y="410" width="7.5" height="7.5" fill="none" stroke="#dcdcdc" stroke-width="1.1"/><g fill="#dcdcdc"><rect x="1117.5" y="408.5" width="3" height="3"/><rect x="1125" y="408.5" width="3" height="3"/><rect x="1117.5" y="416" width="3" height="3"/><rect x="1125" y="416" width="3" height="3"/></g>
<path d="M1140 412.5 H1143.5 V418 H1140 Z" fill="#dcdcdc"/><path d="M1141.5 412 V409 H1145 L1147 411 V416.5 H1144" fill="none" stroke="#dcdcdc" stroke-width="0.9"/>
<rect x="1162.5" y="410" width="5" height="11" rx="2.5" fill="#474747" stroke="#3f3f3f" stroke-width="0.6"/><circle cx="1165" cy="411" r="2.6" fill="#e6e6e6"/>
</svg>
<!-- blend row -->
<div class="a" style="left:973px;top:431px;width:96px;height:17px;background:#474747;border-radius:2px"></div>
<div class="t" style="left:979px;top:434px;font-size:10px;color:#dadada"><i>正</i><i>常</i></div>
<svg class="a" style="left:1061px;top:438.5px" width="6" height="4"><path d="M0.5 0.5 L3 3 L5.5 0.5" stroke="#aaa" stroke-width="0.8" fill="none"/></svg>
<div class="t" style="left:1076px;top:433.5px;font-size:10px;color:#c8c8c8"><i>不</i><i>透</i><i>明</i><i>度</i>:</div>
<div class="a" style="left:969px;top:424.5px;width:312px;height:1px;background:#4a4a4a"></div><div class="a" style="left:969px;top:449px;width:312px;height:1px;background:#4a4a4a"></div>
<div class="a" style="left:1124px;top:431.5px;width:31px;height:13.5px;background:#474747"></div>
<div class="a" style="left:1156px;top:431.5px;width:12px;height:13.5px;background:#474747"></div>
<div class="t" style="left:1125.5px;top:434.5px;font-size:9px;color:#e6e6e6">100%</div>
<svg class="a" style="left:1159px;top:438.5px" width="6" height="4"><path d="M0.5 0.5 L3 3 L5.5 0.5" stroke="#bbb" stroke-width="0.8" fill="none"/></svg>
<!-- lock row -->
<div class="t" style="left:975px;top:457px;font-size:10px;color:#c8c8c8"><i>锁</i><i>定</i>:</div>
<svg class="a" style="left:1003px;top:454px" width="90" height="16" viewBox="1003 454 90 16">
<rect x="1006" y="457" width="9" height="9" fill="#e0e0e0"/><g fill="#444"><rect x="1007.5" y="458.5" width="2" height="2"/><rect x="1011.5" y="458.5" width="2" height="2"/><rect x="1009.5" y="460.5" width="2" height="2"/><rect x="1007.5" y="462.5" width="2" height="2"/><rect x="1011.5" y="462.5" width="2" height="2"/></g>
<path d="M1027.5 463 L1033 457" stroke="#e0e0e0" stroke-width="1.8" stroke-linecap="round" fill="none"/><path d="M1023.3 468.3 Q1023.5 464.5 1025.5 463 Q1027.3 462 1028.3 463.8 Q1027.8 467 1023.3 468.3 Z" fill="#e0e0e0"/>
<path d="M1047 456.5 V467 M1041.8 461.8 H1052.2" stroke="#e0e0e0" stroke-width="1.1"/><path d="M1047 455.5 L1045.5 457.5 H1048.5 Z M1047 468 L1045.5 466 H1048.5 Z M1041 461.8 L1043 460.3 V463.3 Z M1053 461.8 L1051 460.3 V463.3 Z" fill="#e0e0e0"/>
<path d="M1059.5 459 H1068.5 L1070.5 461 V466 M1061.5 457 V466.5 H1071.5 M1061.5 468 V466.5 M1070.5 468 V466.5" stroke="#e0e0e0" stroke-width="1" fill="none"/>
<rect x="1080.5" y="461.5" width="8" height="6" fill="#e0e0e0"/><path d="M1082.5 461.5 V459.5 Q1084.5 456.5 1086.5 459.5 V461.5" stroke="#e0e0e0" stroke-width="1.2" fill="none"/>
</svg>
<div class="t" style="left:1096px;top:457px;font-size:10px;color:#c8c8c8"><i>填</i><i>充</i>:</div>
<div class="a" style="left:1124px;top:455.5px;width:31px;height:13.5px;background:#474747"></div>
<div class="a" style="left:1156px;top:455.5px;width:12px;height:13.5px;background:#474747"></div>
<div class="t" style="left:1125.5px;top:457.5px;font-size:9px;color:#e6e6e6">100%</div>
<svg class="a" style="left:1159px;top:461.5px" width="6" height="4"><path d="M0.5 0.5 L3 3 L5.5 0.5" stroke="#bbb" stroke-width="0.8" fill="none"/></svg>

<!-- layers list -->
<div class="a" style="left:969px;top:475.5px;width:297px;height:1px;background:#4a4a4a"></div>
<div class="a" style="left:969px;top:496px;width:297px;height:1px;background:#444"></div>
<div class="a" style="left:969px;top:530.5px;width:297px;height:1px;background:#444"></div>
<div class="a" style="left:995px;top:531.5px;width:272px;height:33px;background:#696969"></div>
<div class="a" style="left:969px;top:564.5px;width:297px;height:1px;background:#444"></div>
<div class="a" style="left:969px;top:599px;width:297px;height:1px;background:#4a4a4a"></div>
<div class="a" style="left:969px;top:632.8px;width:297px;height:1px;background:#4a4a4a"></div>
<div class="a" style="left:969px;top:666px;width:312px;height:1px;background:#454545"></div>
<div class="a" style="left:994.5px;top:476px;width:1px;height:190px;background:#4e4e4e"></div>
<svg class="a" style="left:976px;top:482.5px" width="12" height="8"><path d="M0.6 4 Q6 -1.8 11.4 4 Q6 9.8 0.6 4 Z" fill="#e4e4e4"/><circle cx="6" cy="4" r="2.3" fill="#4a4a4a"/><circle cx="6.6" cy="3.3" r="0.7" fill="#9a9a9a"/></svg><svg class="a" style="left:976px;top:510px" width="12" height="8"><path d="M0.6 4 Q6 -1.8 11.4 4 Q6 9.8 0.6 4 Z" fill="#e4e4e4"/><circle cx="6" cy="4" r="2.3" fill="#4a4a4a"/><circle cx="6.6" cy="3.3" r="0.7" fill="#9a9a9a"/></svg><svg class="a" style="left:976px;top:544.5px" width="12" height="8"><path d="M0.6 4 Q6 -1.8 11.4 4 Q6 9.8 0.6 4 Z" fill="#e4e4e4"/><circle cx="6" cy="4" r="2.3" fill="#4a4a4a"/><circle cx="6.6" cy="3.3" r="0.7" fill="#9a9a9a"/></svg><svg class="a" style="left:976px;top:578.5px" width="12" height="8"><path d="M0.6 4 Q6 -1.8 11.4 4 Q6 9.8 0.6 4 Z" fill="#e4e4e4"/><circle cx="6" cy="4" r="2.3" fill="#4a4a4a"/><circle cx="6.6" cy="3.3" r="0.7" fill="#9a9a9a"/></svg><svg class="a" style="left:976px;top:612.5px" width="12" height="8"><path d="M0.6 4 Q6 -1.8 11.4 4 Q6 9.8 0.6 4 Z" fill="#e4e4e4"/><circle cx="6" cy="4" r="2.3" fill="#4a4a4a"/><circle cx="6.6" cy="3.3" r="0.7" fill="#9a9a9a"/></svg><svg class="a" style="left:976px;top:646.5px" width="12" height="8"><path d="M0.6 4 Q6 -1.8 11.4 4 Q6 9.8 0.6 4 Z" fill="#e4e4e4"/><circle cx="6" cy="4" r="2.3" fill="#4a4a4a"/><circle cx="6.6" cy="3.3" r="0.7" fill="#9a9a9a"/></svg>
<svg class="a" style="left:998px;top:482px" width="4" height="8"><path d="M0.8 0.5 L3 4 L0.8 7.5" stroke="#aaa" stroke-width="0.8" fill="none"/></svg>
<div class="a" style="left:1007px;top:482.5px;width:5px;height:1.5px;background:#dcdcdc"></div>
<div class="a" style="left:1007px;top:483.5px;width:12.5px;height:7.5px;background:#dcdcdc"></div>
<div class="t" style="left:1030px;top:481px;font-size:10px;color:#dadada">logo</div>
<div class="a" style="left:998.5px;top:501.5px;width:25.5px;height:25.5px;background-color:#fff;background-image:linear-gradient(45deg,#e6e6e6 25%,transparent 25%,transparent 75%,#e6e6e6 75%),linear-gradient(45deg,#e6e6e6 25%,transparent 25%,transparent 75%,#e6e6e6 75%);background-size:4px 4px;background-position:0 0,2px 2px;border:0.5px solid #333"></div><div class="a" style="left:1000.0px;top:502.7px;width:17px;height:3px;background:#000;border-radius:1px"></div><div class="a" style="left:1000.0px;top:510.0px;width:17px;height:3px;background:#000;border-radius:1px"></div>
<div class="t" style="left:1033px;top:508.5px;font-size:10px;color:#dadada"><i>低</i><i>窗</i><i>线</i><i>侧</i><i>窗</i></div>
<div class="a" style="left:998.5px;top:535.5px;width:25.5px;height:25.5px;background-color:#fff;background-image:linear-gradient(45deg,#e6e6e6 25%,transparent 25%,transparent 75%,#e6e6e6 75%),linear-gradient(45deg,#e6e6e6 25%,transparent 25%,transparent 75%,#e6e6e6 75%);background-size:4px 4px;background-position:0 0,2px 2px;border:0.5px solid #333"></div><div class="a" style="left:1000.0px;top:536.7px;width:17px;height:3px;background:#000;border-radius:1px"></div><div class="a" style="left:1000.0px;top:544.0px;width:17px;height:3px;background:#000;border-radius:1px"></div>
<svg class="a" style="left:996px;top:532px" width="31" height="32"><path d="M1 6 V1 H6 M25 1 H30 V6 M1 26 V31 H6 M25 31 H30 V26" stroke="#e8e8e8" stroke-width="1" fill="none"/></svg>
<div class="t" style="left:1033px;top:543px;font-size:10px;color:#e6e6e6"><i>高</i><i>窗</i><i>线</i><i>侧</i><i>窗</i></div>
<div class="a" style="left:998.5px;top:569.5px;width:25.5px;height:25.5px;background-color:#fff;background-image:linear-gradient(45deg,#e6e6e6 25%,transparent 25%,transparent 75%,#e6e6e6 75%),linear-gradient(45deg,#e6e6e6 25%,transparent 25%,transparent 75%,#e6e6e6 75%);background-size:4px 4px;background-position:0 0,2px 2px;border:0.5px solid #333"></div><div class="a" style="left:1017.5px;top:570.5px;width:6px;height:4px;background:#000"></div><div class="a" style="left:1017.5px;top:577.5px;width:6px;height:3px;background:#000"></div><div class="a" style="left:1017.5px;top:583.5px;width:6px;height:3px;background:#000"></div><div class="a" style="left:1001.5px;top:576.5px;width:8px;height:1px;background:#777"></div>
<div class="t" style="left:1033px;top:577px;font-size:10px;color:#dadada"><i>细</i><i>节</i></div>
<div class="a" style="left:998.5px;top:603.5px;width:25.5px;height:25.5px;background-color:#fff;background-image:linear-gradient(45deg,#e6e6e6 25%,transparent 25%,transparent 75%,#e6e6e6 75%),linear-gradient(45deg,#e6e6e6 25%,transparent 25%,transparent 75%,#e6e6e6 75%);background-size:4px 4px;background-position:0 0,2px 2px;border:0.5px solid #333"></div><div class="a" style="left:999.5px;top:623.5px;width:23px;height:1px;background:#f4f4f4"></div>
<div class="t" style="left:1033px;top:611px;font-size:10px;color:#dadada"><i>空</i><i>调</i></div>
<div class="a" style="left:998.5px;top:637.5px;width:25.5px;height:25.5px;background-color:#fff;background-image:linear-gradient(45deg,#e6e6e6 25%,transparent 25%,transparent 75%,#e6e6e6 75%),linear-gradient(45deg,#e6e6e6 25%,transparent 25%,transparent 75%,#e6e6e6 75%);background-size:4px 4px;background-position:0 0,2px 2px;border:0.5px solid #333"></div><div class="a" style="left:1016.5px;top:642.5px;width:2px;height:1px;background:#555"></div>
<div class="t" style="left:1033px;top:645px;font-size:10px;color:#dadada"><i>踏</i><i>步</i></div>
<!-- layers scrollbar -->
<div class="a" style="left:1267px;top:476px;width:14px;height:190px;background:#4a4a4a"></div>
<div class="a" style="left:1269px;top:490px;width:9px;height:134px;background:#6a6a6a"></div>
<svg class="a" style="left:1270px;top:482.5px" width="7" height="4"><path d="M0.5 3.5 L3.5 0.5 L6.5 3.5" stroke="#999" stroke-width="0.8" fill="none"/></svg>
<svg class="a" style="left:1270px;top:655px" width="7" height="4"><path d="M0.5 0.5 L3.5 3.5 L6.5 0.5" stroke="#999" stroke-width="0.8" fill="none"/></svg>
<!-- layers footer -->
<svg class="a" style="left:1105px;top:668px;will-change:transform" width="100" height="18" viewBox="1105 668 100 18">
<path d="M1114 674.5 H1112.5 Q1110.5 674.5 1110.5 677 Q1110.5 679.5 1112.5 679.5 H1114 M1118.5 674.5 H1120 Q1122 674.5 1122 677 Q1122 679.5 1120 679.5 H1118.5 M1113.5 677 H1119" stroke="#8e8e8e" stroke-width="1" fill="none"/>
<text x="1134.5" y="681" font-family="Liberation Serif" font-style="italic" font-size="10.5" fill="#b8b8b8">fx</text><rect x="1144" y="681.5" width="1.5" height="1" fill="#ccc"/>
<rect x="1156.5" y="673" width="11" height="8" fill="#e0e0e0"/><circle cx="1162" cy="677" r="2.3" fill="#535353"/>
<circle cx="1184.5" cy="677" r="4.6" fill="none" stroke="#e0e0e0" stroke-width="1"/><path d="M1187.8 673.7 A4.6 4.6 0 0 1 1181.2 680.3 Z" fill="#e0e0e0"/>
</svg>
<div class="t" style="left:1192.5px;top:665px;font-size:17px;font-weight:bold;color:#fff;font-family:'Liberation Mono',monospace;letter-spacing:0.4px;-webkit-text-stroke:0.5px #000;text-shadow:1px 0 #000,-1px 0 #000,0 1px #000,0 -1px #000,1px 1px #000,-1px -1px #000,1px -1px #000,-1px 1px #000">@Vefans</div>
<!-- doc tab text -->
<div class="t" style="left:41.5px;top:57.8px;font-size:10px;letter-spacing:-0.22px;color:#dedede">bodyE6.psd @ 43.1% (<i style="width:9.75px">高</i><i style="width:9.75px">窗</i><i style="width:9.75px">线</i><i style="width:9.75px">侧</i><i style="width:9.75px">窗</i>, RGB/8)</div>
<svg class="a" style="left:232.5px;top:59.5px" width="8" height="8"><path d="M0.8 0.8 L7 7 M7 0.8 L0.8 7" stroke="#a0a0a0" stroke-width="0.9"/></svg>
<!-- status text -->
<div class="a" style="left:73px;top:673px;width:154px;height:14px;background:#4b4b4b"></div>
<div class="t" style="left:38.5px;top:676px;font-size:9px;color:#dedede">43.07%</div>
<div class="t" style="left:80px;top:676px;font-size:9.5px;color:#dedede">2048 <i>像</i><i>素</i> x 2048 <i>像</i><i>素</i> (96 ppi)</div>
<svg class="a" style="left:218.5px;top:676.5px" width="4" height="7"><path d="M0.7 0.5 L3 3.5 L0.7 6.5" stroke="#b0b0b0" stroke-width="0.8" fill="none"/></svg>
<!-- taskbar -->
<div class="a" style="left:0;top:687.7px;width:1281px;height:7px;background:linear-gradient(90deg,#222238 0%,#25273f 35%,#283150 58%,#2b2a4a 75%,#2c2240 88%,#3a2434 100%)"></div><div class="a" style="left:165px;top:687.7px;width:41px;height:7px;background:#575673"></div>
</body></html>
